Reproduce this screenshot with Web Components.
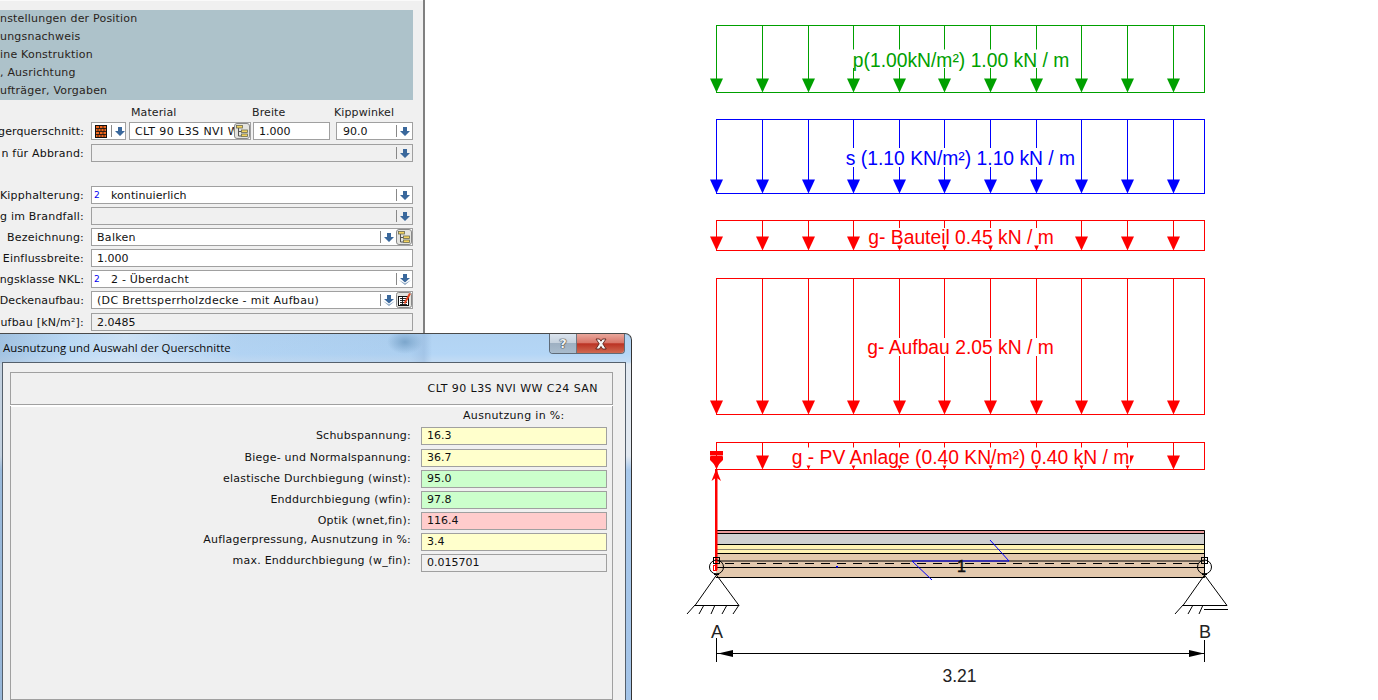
<!DOCTYPE html>
<html lang="de"><head><meta charset="utf-8"><title>Ausnutzung</title>
<style>
html,body{margin:0;padding:0;background:#fff;overflow:hidden}
body{width:1378px;height:700px;font:11px "DejaVu Sans",sans-serif;color:#111}
</style></head><body>
<app-shell>
  <position-panel>
    <nav-list>
      <nav-item>nstellungen der Position</nav-item>
      <nav-item>ungsnachweis</nav-item>
      <nav-item>ine Konstruktion</nav-item>
      <nav-item>, Ausrichtung</nav-item>
      <nav-item>ufträger, Vorgaben</nav-item>
    </nav-list>
    <column-heads></column-heads>
    <form-row label="gerquerschnitt:" gap="4" ls=".1">
      <ui-field style="width:35px;margin-right:3px" icon-left="brick" arrow="single"></ui-field>
      <ui-field style="width:122px;margin-right:2px" value="CLT 90 L3S NVI W" icon="tree" pad="5" ls=".44"></ui-field>
      <ui-field style="width:77px;margin-right:6px" value="1.000" pad="5"></ui-field>
      <ui-field style="width:77px" value="90.0" arrow="single" pad="6"></ui-field>
    </form-row>
    <form-row label="n für Abbrand:" gap="24"><ui-field disabled arrow="single"></ui-field></form-row>
    <form-row label="Kipphalterung:" gap="3"><ui-field code="2" value="kontinuierlich" arrow="single" ls=".08"></ui-field></form-row>
    <form-row label="g im Brandfall:" gap="3"><ui-field disabled arrow="single"></ui-field></form-row>
    <form-row label="Bezeichnung:" gap="3"><ui-field value="Balken" arrow="single" icon="tree" ls=".3"></ui-field></form-row>
    <form-row label="Einflussbreite:" gap="3"><ui-field value="1.000"></ui-field></form-row>
    <form-row label="ngsklasse NKL:" gap="3" ls=".1"><ui-field code="2" value="2 - Überdacht" arrow="double" ls=".22"></ui-field></form-row>
    <form-row label="Deckenaufbau:" gap="4" ls=".1"><ui-field value="(DC Brettsperrholzdecke - mit Aufbau)" arrow="double" icon="edit" ls=".32"></ui-field></form-row>
    <form-row label="ufbau [kN/m²]:" gap="0"><ui-field disabled value="2.0485"></ui-field></form-row>
  </position-panel>
  <beam-diagram></beam-diagram>
  <calc-dialog heading="Ausnutzung und Auswahl der Querschnitte">
    <result-row label="Schubspannung:" value="16.3" tone="y" gap="4"></result-row>
    <result-row label="Biege- und Normalspannung:" value="36.7" tone="y" gap="3"></result-row>
    <result-row label="elastische Durchbiegung (winst):" value="95.0" tone="g" gap="3"></result-row>
    <result-row label="Enddurchbiegung (wfin):" value="97.8" tone="g" gap="3"></result-row>
    <result-row label="Optik (wnet,fin):" value="116.4" tone="r" gap="3"></result-row>
    <result-row label="Auflagerpressung, Ausnutzung in %:" value="3.4" tone="y" lift="5" gap="3"></result-row>
    <result-row label="max. Enddurchbiegung (w_fin):" value="0.015701" tone="n" lift="4" gap="0"></result-row>
  </calc-dialog>
</app-shell>
<script>
function shadow(el, html){ el.attachShadow({mode:'open'}).innerHTML = html; }

const ICONS = {
  single:`<svg width="10" height="9" viewBox="0 0 10 9"><path d="M3 0h4v4h3L5 9 0 4h3z" fill="#3a689c"/></svg>`,
  double:`<svg width="12" height="11" viewBox="0 0 12 11"><path d="M4 0h4v4h3L6 8.500 1 4h3z" fill="#3a689c"/><path d="M0 6l6 5 6-5-6 3.500z" fill="#7f9dbd"/></svg>`,
  brick:`<svg width="12" height="13" viewBox="0 0 12 13"><rect x=".5" y=".5" width="11" height="12" fill="#f0661c" stroke="#111"/><path d="M1 3.500h10M1 6.500h10M1 9.500h10M4.500 1v2.500M8 1v2.500M3 3.500v3M6 3.500v3M9 3.500v3M4.500 6.500v3M8 6.500v3M3 9.500v3M6 9.500v3M9 9.500v3" stroke="#111" stroke-width=".8" fill="none"/></svg>`,
  tree:`<svg width="16" height="16" viewBox="0 0 16 16"><rect x=".5" y=".5" width="15" height="15" rx="2.500" fill="#e4e4e0" stroke="#8a8a8a"/><path d="M4.500 4v9h3M4.500 8.500h3" stroke="#555" fill="none"/><rect x="2.500" y="2.500" width="6" height="2.500" fill="#f4d35e" stroke="#6a6a50" stroke-width=".8"/><rect x="7.500" y="7" width="6" height="2.500" fill="#f4d35e" stroke="#6a6a50" stroke-width=".8"/><rect x="7.500" y="11" width="6" height="2.500" fill="#f4d35e" stroke="#6a6a50" stroke-width=".8"/></svg>`,
  edit:`<svg width="16" height="16" viewBox="0 0 16 16"><rect x=".5" y=".5" width="15" height="15" rx="2" fill="#e4e4e0" stroke="#8a8a8a"/><rect x="2.500" y="4.500" width="10" height="9" fill="#fff" stroke="#111"/><path d="M4 6.500h7M4 8.500h7M4 10.500h7M4 12.500h7M6.500 5v8" stroke="#111" stroke-width=".9"/><path d="M8.500 11.500L14 1.500" stroke="#e0431f" stroke-width="2"/></svg>`
};

customElements.define('app-shell', class extends HTMLElement{
  constructor(){super();shadow(this,`<style>:host{display:flex;position:relative;width:1378px;height:700px;overflow:hidden;align-items:flex-start}</style><slot></slot>`);}
});

customElements.define('position-panel', class extends HTMLElement{
  constructor(){super();shadow(this,`<style>:host{display:block;box-sizing:border-box;flex:none;width:425px;height:334px;padding:10px 0 0 0;background:#f0f0f0;border-right:2px solid #808080;border-bottom:1px solid #555;box-shadow:inset 0 1px 0 #fafafa;position:relative}</style><slot></slot>`);}
});

customElements.define('nav-list', class extends HTMLElement{
  constructor(){super();shadow(this,`<style>:host{display:block;width:413px;height:90px;background:#adc2ca}</style><slot></slot>`);}
});
customElements.define('nav-item', class extends HTMLElement{
  constructor(){super();shadow(this,`<style>:host{display:block;height:18px;line-height:17px;white-space:nowrap;color:#2a1f1a;letter-spacing:.2px}</style><slot></slot>`);}
});

customElements.define('column-heads', class extends HTMLElement{
  constructor(){super();shadow(this,`<style>:host{display:flex;height:22px;line-height:25px;padding-left:131px;color:#222;letter-spacing:.1px}
  span:nth-of-type(1){width:121px}span:nth-of-type(2){width:82px}</style><span>Material</span><span>Breite</span><span>Kippwinkel</span>`);}
});

customElements.define('form-row', class extends HTMLElement{
  constructor(){super();
    const l=this.getAttribute('label')||'', g=this.getAttribute('gap')||3, ls=this.getAttribute('ls')||'.2';
    shadow(this,`<style>:host{display:flex;height:18px;margin-bottom:${g}px;width:413px}
    .l{flex:none;width:84px;margin-right:7px;display:flex;justify-content:flex-end;white-space:nowrap;line-height:20px;color:#111;letter-spacing:${ls}px}
    .f{flex:1;display:flex;min-width:0}</style><div class="l"><span>${l}</span></div><div class="f"><slot></slot></div>`);}
});

customElements.define('ui-field', class extends HTMLElement{
  constructor(){super();
    const a=n=>this.getAttribute(n);
    const dis=this.hasAttribute('disabled');
    const pad=a('pad')||5;
    const code=a('code')?`<span class="c">${a('code')}</span>`:'';
    const left=a('icon-left')?`<span class="il">${ICONS[a('icon-left')]}</span>`:'';
    const txt=a('value')?`<span class="t">${a('value')}</span>`:'<span class="t"></span>';
    const arr=a('arrow')?`<span class="a">${ICONS[a('arrow')]}</span>`:'';
    const ic=a('icon')?`<span class="i">${ICONS[a('icon')]}</span>`:'';
    shadow(this,`<style>:host{display:flex;flex:1 1 auto;box-sizing:border-box;height:18px;border:1px solid #a0a0a0;background:${dis?'#f0f0f0':'#fff'};align-items:center;overflow:hidden;min-width:0}
    :host([style]){flex:none}
    .t{flex:1;min-width:0;white-space:nowrap;overflow:hidden;padding-left:${code?'0':pad+'px'};padding-top:1px;line-height:15px;color:#111;letter-spacing:${a('ls')||0}px}
    .c{flex:none;width:19px;padding-left:2px;box-sizing:border-box;font:9px "DejaVu Sans",sans-serif;color:#0000f0}
    .il{flex:none;width:14px;padding-left:3px;display:flex;margin-right:1px}
    .a{flex:none;width:16px;height:12px;border-left:1px solid #888;display:flex;align-items:center;justify-content:center;box-sizing:border-box}
    .i{flex:none;width:16px;height:16px;display:flex}
    :host([icon-left]) .t{display:none}
    :host([icon-left]) .a{margin-left:1px;width:17px}
    </style>${left}${code}${txt}${arr}${ic}`);}
});

customElements.define('calc-dialog', class extends HTMLElement{
  constructor(){super();
    shadow(this,`<style>
    :host{display:flex;flex-direction:column;box-sizing:border-box;position:absolute;left:0;top:333px;width:632px;height:367px;border-top:1px solid #4a4a4a;border-right:1px solid #333;border-top-right-radius:7px;
      background:
        radial-gradient(18px 12px at 405px 8px,#7ca6cc,transparent),
        linear-gradient(90deg,rgba(120,150,180,.3) 0,rgba(200,225,245,.35) 70px,rgba(225,235,245,.55) 125px,rgba(170,200,230,.2) 240px,rgba(130,170,210,.15) 410px,rgba(130,165,205,.35) 424px,transparent 432px),
        linear-gradient(180deg,#b2d3f2 0,#b4d6f6 20px,#c4dcf4 28px,#e2e9f1 30px,#e2e9f1 122px,#a8c9ec 136px,#a4c4e8 100%);
      }
    .bar{flex:none;height:28px;display:flex;align-items:flex-start;position:relative;padding-left:3px}
    .ttl{font:11.4px/28px "Open Sans",sans-serif;color:#0b0b0b;flex:1}
    .btns{display:flex;margin-right:6px;height:20px;border:1px solid #5f6b78;border-top:0;border-radius:0 0 4px 4px;overflow:hidden;box-sizing:border-box}
    .b{display:flex;align-items:center;justify-content:center;box-sizing:border-box}
    .h{width:27px;background:linear-gradient(180deg,#dbe4ee 0,#c6d2de 45%,#9eb0c2 50%,#a9bccd 100%);border-right:1px solid #6d7680;font:bold 13px "DejaVu Sans",sans-serif;color:#eef2f6;text-shadow:0 0 1px #333,0 0 1px #333,0 0 1px #333}
    .x{width:47px;background:linear-gradient(180deg,#e9a79c 0,#d9776a 45%,#bb3324 52%,#cf6a52 100%)}
    .client{flex:1;margin:0 5px 0 2px;background:#f0f0f0;border:1px solid #55606c;border-bottom:0;padding:9px 12px 0 7px;display:flex;flex-direction:column;min-height:0}
    .p1{flex:none;box-sizing:border-box;height:33px;border:1px solid #a0a0a0;display:flex;justify-content:flex-end;align-items:center;padding-right:14px;color:#111;box-shadow:0 1px 0 #fff;letter-spacing:.44px}
    .p2{flex:1;border:1px solid #a0a0a0;border-top:0;margin-top:1px;box-shadow:inset 0 1px 0 #fff;padding-top:4px;display:flex;flex-direction:column}
    .hd{height:17px;line-height:12px;padding-left:452px;color:#111;white-space:nowrap;letter-spacing:.33px}
    </style>
    <div class="bar"><span class="ttl">${this.getAttribute('heading')}</span>
      <div class="btns"><div class="b h">?</div><div class="b x"><svg width="16" height="12" viewBox="0 0 16 12"><path d="M3 1h3.500L8 3.200 9.500 1H13L9.800 5.800 13.200 11H9.600L8 8.500 6.400 11H2.800L6.200 5.800z" fill="#f6f6f6" stroke="#5a2018" stroke-width=".9"/></svg></div></div>
    </div>
    <div class="client">
      <div class="p1">CLT 90 L3S NVI WW C24 SAN</div>
      <div class="p2"><div class="hd">Ausnutzung in %:</div><slot></slot></div>
    </div>`);}
});

customElements.define('result-row', class extends HTMLElement{
  constructor(){super();
    const a=n=>this.getAttribute(n);
    const col={y:'#ffffcc',g:'#ccffcc',r:'#ffcccc',n:'#f0f0f0'}[a('tone')];
    const lift=+(a('lift')||0);
    shadow(this,`<style>:host{display:flex;height:18px;margin-bottom:${a('gap')||3}px}
    .l{flex:none;width:400px;text-align:right;line-height:${18-lift}px;white-space:nowrap;color:#111;letter-spacing:.22px}
    .v{flex:none;box-sizing:border-box;margin-left:10px;width:186px;height:18px;border:1px solid #a0a0a0;background:${col};padding-left:5px;line-height:16px;color:#111}
    </style><div class="l">${a('label')}</div><div class="v">${a('value')}</div>`);}
});

customElements.define('beam-diagram', class extends HTMLElement{
  constructor(){super();
    const xs=[716,762,808,853,899,944,990,1036,1081,1127,1173];
    const band=(c,y1,y2,txt,tx1,tx2,base,w1,w2)=>{
      let s=`<rect x="716.500" y="${y1+.5}" width="488" height="${y2-y1}" fill="none" stroke="${c}"/>`;
      for(const x of xs){
        s+=`<path d="M${x+.5} ${y1}V${y2-12}" stroke="${c}"/><path d="M${x-6} ${y2-13.500}H${x+7}L${x+.5} ${y2+.5}z" fill="${c}"/>`;
      }
      s+=`<rect x="${tx1}" y="${w1}" width="${tx2-tx1}" height="${w2-w1}" fill="#fff"/>`;
      s+=`<text x="${(tx1+tx2)/2}" y="${base}" fill="${c}" text-anchor="middle" font-size="19.3">${txt}</text>`;
      return s;
    };
    let s='';
    s+=band('#00a000',25,92,'p(1.00kN/m²) 1.00 kN / m',853,1069,67,49.5,68);
    s+=band('#0000ff',119,193,'s (1.10 KN/m²) 1.10 kN / m',846,1075,164.5,148,167);
    s+=band('#ff0000',220,250,'g- Bauteil 0.45 kN / m',868,1054,243.5,228,245.500);
    s+=band('#ff0000',278,414,'g- Aufbau 2.05 kN / m',866,1055,354,338,356);
    s+=band('#ff0000',442,469,'g - PV Anlage (0.40 KN/m²) 0.40 kN / m',791,1130,464,447.500,465.500);
    // beam layers
    s+=`<rect x="716" y="530" width="489" height="4" fill="#e99b9b"/>
    <rect x="716" y="534" width="489" height="11" fill="#d0d0d0"/>
    <rect x="716" y="545" width="489" height="9" fill="#fff2b3"/>
    <rect x="716" y="554" width="489" height="24" fill="#e3c9ae"/>
    <path d="M716 549.500H1205" stroke="#8a8470"/>
    <path d="M716 530.500H1204.500V577.500H716M716 533.500H1205M716 544.500H1205M716 553.500H1205M716 561H1205M716 567.500H1205" stroke="#000" fill="none"/>
    <path d="M725 563.500H1200" stroke="#000" stroke-width="1.200" stroke-dasharray="9 7"/>`;
    s+=`<path d="M912 561H1009" stroke="#0000ff"/><path d="M912 561L932 580M1009 561L990 540" stroke="#0000ff" fill="none"/><rect x="836" y="566" width="2" height="1.500" fill="#00f"/>`;
    s+=`<text x="961.500" y="572" fill="#111" stroke="#111" stroke-width=".5" font-size="16" text-anchor="middle">1</text>`;
    // stacked reactions at support A
    s+=`<path d="M710 451H723V455H710zM710 456.500H723V460L716.500 466.500L710 460z" fill="#f00"/>
    <path d="M715 469h2.500v101H715z" fill="#f00"/><path d="M716.200 469L711.500 481L716.200 477.500L721 481z" fill="#f00"/>
    <rect x="713.500" y="565.500" width="3" height="5" fill="none" stroke="#f00"/>`;
    // supports
    s+=`<g fill="none" stroke="#000">
      <circle cx="716.500" cy="567" r="7"/><rect x="713.500" y="557.500" width="6" height="6"/>
      <path d="M716.500 575L695 605.500H739L716.500 575"/>
      <path d="M695 605L687 614M704 605L699 614M715 605L711 614M727 605L722 614M739 605L733 614"/>
      <circle cx="1204.500" cy="567" r="7"/><rect x="1201.500" y="557.500" width="6" height="6"/>
      <path d="M1204.500 575L1183 605.500H1227L1204.500 575"/>
      <path d="M1204 609.500H1228M1183 605L1175 614M1193 605L1188 614M1203 605L1199 614"/>
    </g><path d="M714 575h5v-1.500h-5zM1202 575h5v-1.500h-5z" fill="#000"/>`;
    // dimension
    s+=`<text x="717" y="638" font-size="18" fill="#222" text-anchor="middle">A</text>
    <text x="1205" y="638" font-size="18" fill="#222" text-anchor="middle">B</text>
    <path d="M716.500 638V662M1204.500 640V662M716 653.500H1204" stroke="#000" fill="none"/>
    <path d="M718 653.500L733 650V657zM1204 653.500L1189 650V657z" fill="#000"/>
    <text x="959.500" y="682" font-size="17.500" fill="#222" text-anchor="middle">3.21</text>`;
    shadow(this,`<style>:host{display:block;flex:none;width:953px;height:700px}svg{display:block;font-family:"Liberation Sans",Arial,sans-serif}</style>
    <svg width="953" height="700" viewBox="425 0 953 700">${s}</svg>`);}
});
</script>
</body></html>
